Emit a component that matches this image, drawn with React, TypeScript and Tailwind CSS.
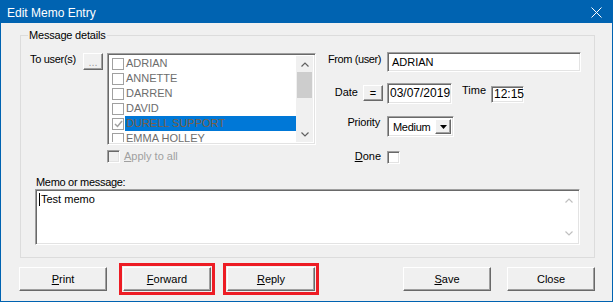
import React from 'react';

const users = [
  { name: 'ADRIAN', checked: false, selected: false },
  { name: 'ANNETTE', checked: false, selected: false },
  { name: 'DARREN', checked: false, selected: false },
  { name: 'DAVID', checked: false, selected: false },
  { name: 'DURELL SUPPORT', checked: true, selected: true },
  { name: 'EMMA HOLLEY', checked: false, selected: false },
];

const raised =
  'bg-[#f0f0f0] border border-t-white border-l-white border-r-[#696969] border-b-[#696969] shadow-[inset_-1px_-1px_0_#a0a0a0]';
const sunken =
  'border border-t-[#a0a0a0] border-l-[#a0a0a0] border-r-white border-b-white shadow-[inset_1px_1px_0_#696969,inset_-1px_-1px_0_#e3e3e3]';

const Chevron = ({ up, color }: { up?: boolean; color: string }) => (
  <svg width="8" height="5" viewBox="0 0 8 5">
    <path d={up ? 'M0.5 4.5 L4 1 L7.5 4.5' : 'M0.5 0.5 L4 4 L7.5 0.5'} fill="none" stroke={color} strokeWidth="1.2" />
  </svg>
);

const Btn = ({ label, u }: { label: string; u?: number }) => (
  <button className={`${raised} w-[88px] h-[24px] flex items-center justify-center text-[11px] leading-[13px]`}>
    {u === undefined ? (
      label
    ) : (
      <>
        {label.slice(0, u)}
        <span className="underline underline-offset-1">{label[u]}</span>
        {label.slice(u + 1)}
      </>
    )}
  </button>
);

const Outlined = ({ children }: { children: React.ReactNode }) => (
  <div className="border-[3px] border-[#ed1c24] p-px">{children}</div>
);

const App = () => {
  return (
    <div className="w-[613px] h-[302px] bg-[#0063b1] flex flex-col font-['Liberation_Sans',Arial,sans-serif] text-[11px] text-black">
      <div className="h-[23px] flex items-center justify-between pl-[7px] pr-[11px] pt-[2px] text-white text-[12px]">
        <span>Edit Memo Entry</span>
        <svg width="11" height="11" viewBox="0 0 11 11">
          <path d="M0.5 0.5 L10.5 10.5 M10.5 0.5 L0.5 10.5" stroke="white" strokeWidth="1" />
        </svg>
      </div>

      <div className="flex-1 mx-px mb-px bg-[#f0f0f0] flex flex-col">
        <fieldset className="ml-[19px] mt-[6px] w-[575px] h-[229px] border border-[#dcdcdc]">
          <legend className="ml-[7px] px-[1px] leading-[13px] tracking-[-0.2px]">Message details</legend>

          <div className="flex pt-[11px]">
            {/* recipients */}
            <div className="flex">
              <span className="ml-[9px] w-[53px] whitespace-nowrap leading-[13px] tracking-[-0.3px]">To user(s)</span>
              <button className={`${raised} w-[20px] h-[17px] flex items-center justify-center text-[#a0a0a0] leading-[10px]`}>
                ...
              </button>
              <div className="ml-[4px] flex flex-col">
                <div className={`${sunken} w-[209px] h-[92px] bg-white p-[2px] flex`}>
                  <div className="flex-1 flex flex-col overflow-hidden">
                    {users.map((u) => (
                      <div key={u.name} className="h-[15px] shrink-0 flex items-center">
                        <div className="ml-[2px] w-[12px] h-[12px] border border-[#a0a0a0] bg-white flex items-center justify-center">
                          {u.checked && (
                            <svg width="9" height="8" viewBox="0 0 9 8">
                              <path d="M1 4 L3.5 6.5 L8 1" fill="none" stroke="#a0a0a0" strokeWidth="1.5" />
                            </svg>
                          )}
                        </div>
                        <span
                          className={`ml-[1px] flex-1 h-[15px] pl-[1px] leading-[15px] whitespace-nowrap ${
                            u.selected ? 'bg-[#0078d7] text-[#7d5f45]' : 'text-[#6d6d6d]'
                          }`}
                        >
                          {u.name}
                        </span>
                      </div>
                    ))}
                  </div>
                  <div className="w-[17px] bg-[#f0f0f0] flex flex-col">
                    <div className="h-[16px] flex items-center justify-center">
                      <Chevron up color="#606060" />
                    </div>
                    <div className="h-[26px] bg-[#cdcdcd] mx-[1px]" />
                    <div className="flex-1" />
                    <div className="h-[16px] flex items-center justify-center">
                      <Chevron color="#606060" />
                    </div>
                  </div>
                </div>
                <label className="mt-[5px] flex items-center text-[#a0a0a0]">
                  <span className={`${sunken} w-[13px] h-[13px] bg-[#f0f0f0]`} />
                  <span className="ml-[4px] leading-[13px]">
                    <span className="underline underline-offset-1">A</span>pply to all
                  </span>
                </label>
              </div>
            </div>

            {/* details */}
            <div className="ml-[12px] flex flex-col">
              <div className="flex items-start -mt-[1px]">
                <span className="w-[59px] pr-[6px] text-right whitespace-nowrap leading-[13px] pt-[1px] tracking-[-0.4px]">
                  From (user)
                </span>
                <div className={`${sunken} w-[194px] h-[20px] bg-white pl-[4px] leading-[18px]`}>ADRIAN</div>
              </div>
              <div className="flex items-start mt-[11px] h-[21px]">
                <div className="w-[59px] flex items-start justify-end pr-[4px]">
                  <span className="leading-[13px] pt-[3px]">Date</span>
                  <button className={`${raised} ml-[5px] mt-[2px] w-[20px] h-[16px] flex items-center justify-center leading-[10px]`}>
                    =
                  </button>
                </div>
                <div className={`${sunken} w-[65px] h-[21px] bg-white pl-[2px] leading-[19px] text-[12px]`}>03/07/2019</div>
                <span className="ml-[10px] w-[29px] leading-[13px] pt-[1px]">Time</span>
                <div className={`${sunken} mt-[3px] w-[33px] h-[17px] bg-white pl-[2px] leading-[15px] text-[12px]`}>12:15</div>
              </div>
              <div className="flex items-start mt-[12px] h-[21px]">
                <span className="w-[59px] pr-[7px] text-right leading-[13px] tracking-[-0.2px]">Priority</span>
                <div className={`${sunken} w-[67px] h-[21px] bg-white p-[2px] flex`}>
                  <span className="flex-1 pl-[3px] leading-[17px] tracking-[-0.3px]">Medium</span>
                  <div className={`${raised} w-[16px] flex items-center justify-center`}>
                    <svg width="7" height="4" viewBox="0 0 7 4">
                      <path d="M0 0 H7 L3.5 4 Z" fill="black" />
                    </svg>
                  </div>
                </div>
              </div>
              <div className="flex items-start mt-[13px]">
                <span className="w-[59px] pr-[6px] text-right leading-[13px]">
                  <span className="underline underline-offset-1">D</span>one
                </span>
                <span className={`${sunken} mt-px w-[13px] h-[13px] bg-white`} />
              </div>
            </div>
          </div>

          {/* memo */}
          <div className="mt-[12px] ml-[14px] flex flex-col">
            <span className="ml-px leading-[13px] tracking-[-0.3px]">Memo or message:</span>
            <div className={`${sunken} w-[545px] h-[56px] bg-white p-[2px] flex`}>
              <div className="flex-1 flex items-start pt-[1px] pl-[1px]">
                <span className="w-px h-[13px] bg-black" />
                <span className="leading-[13px] ml-[1px]">Test memo</span>
              </div>
              <div className="w-[17px] flex flex-col justify-between py-[6px]">
                <div className="flex justify-center">
                  <Chevron up color="#c0c0c0" />
                </div>
                <div className="flex justify-center">
                  <Chevron color="#c0c0c0" />
                </div>
              </div>
            </div>
          </div>
        </fieldset>

        <div className="mt-[5px] h-[32px] flex items-center">
          <div className="ml-[18px]">
            <Btn label="Print" u={0} />
          </div>
          <div className="ml-[12px]">
            <Outlined>
              <Btn label="Forward" u={0} />
            </Outlined>
          </div>
          <div className="ml-[8px]">
            <Outlined>
              <Btn label="Reply" u={0} />
            </Outlined>
          </div>
          <div className="ml-[84px]">
            <Btn label="Save" u={0} />
          </div>
          <div className="ml-[16px]">
            <Btn label="Close" />
          </div>
        </div>
      </div>
    </div>
  );
};

export default App;
